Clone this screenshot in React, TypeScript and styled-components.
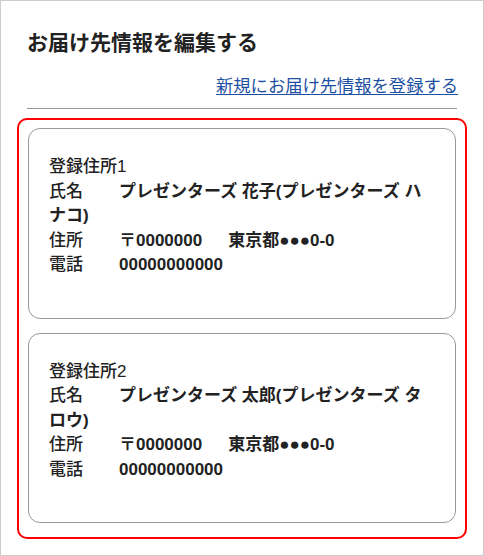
import * as React from 'react';

import styled, { createGlobalStyle } from 'styled-components';

interface IAddress {
    title: string;
    name: string;
    zip: string;
    address: string;
    tel: string;
}

const addresses: IAddress[] = [
    {
        title: '登録住所1',
        name: 'プレゼンターズ 花子(プレゼンターズ ハナコ)',
        zip: '〒0000000',
        address: '東京都●●●0-0',
        tel: '00000000000',
    },
    {
        title: '登録住所2',
        name: 'プレゼンターズ 太郎(プレゼンターズ タロウ)',
        zip: '〒0000000',
        address: '東京都●●●0-0',
        tel: '00000000000',
    },
];

const App = () => {
    return (
        <>
            <GlobalStyle />
            <Frame>
                <Header>
                    <Title>お届け先情報を編集する</Title>
                    <LinkRow>
                        <NewLink href="#">新規にお届け先情報を登録する</NewLink>
                    </LinkRow>
                    <Divider />
                </Header>
                <SelectedList>
                    {addresses.map((item) => (
                        <Card key={item.title}>
                            <CardTitle>{item.title}</CardTitle>
                            <Row>
                                <Label>氏名</Label>
                                <Value>{item.name}</Value>
                            </Row>
                            <Row>
                                <Label>住所</Label>
                                <Value>{item.zip}</Value>
                                <Value gap>{item.address}</Value>
                            </Row>
                            <Row>
                                <Label>電話</Label>
                                <Value>{item.tel}</Value>
                            </Row>
                        </Card>
                    ))}
                </SelectedList>
            </Frame>
        </>
    );
};

export default App;

const GlobalStyle = createGlobalStyle`
    html, body {
        margin: 0;
        padding: 0;
        background-color: #ffffff;
    }

    body {
        font-family: 'Liberation Sans', 'Noto Sans CJK JP', sans-serif;
        color: #222222;
    }
`;

const Frame = styled.div`
    box-sizing: border-box;

    width: 484px;
    height: 556px;

    padding: 0 16px;

    border: 1px solid #cccccc;
`;

const Header = styled.div`
    padding: 0 9px 0 10px;
`;

const Title = styled.h1`
    margin: 0;

    padding-top: 28px;

    font-size: 21px;
    font-weight: 700;
    line-height: 28px;
`;

const LinkRow = styled.div`
    display: flex;
    justify-content: flex-end;

    margin-top: 17px;
`;

const NewLink = styled.a`
    font-size: 17.3px;
    line-height: 24px;

    color: #1d50a2;
    text-decoration: underline;
    text-underline-offset: 2px;
`;

const Divider = styled.hr`
    margin: 10px 1px 0 0;

    border: none;
    border-top: 1px solid #999999;
`;

const SelectedList = styled.div`
    margin-top: 9px;

    padding: 8px 9px 0;

    border: 2px solid #ff0000;
    border-radius: 10px;
`;

const Card = styled.div`
    padding: 26px 18px 40px 20px;
    margin-bottom: 14px;

    border: 1px solid #999999;
    border-radius: 12px;

    font-size: 17px;
    line-height: 24.5px;
`;

const CardTitle = styled.div`
    font-weight: 500;
`;

const Row = styled.div``;

const Label = styled.span`
    margin-right: 36px;

    font-weight: 500;
`;

const Value = styled.span<{ gap?: boolean }>`
    font-weight: 700;

    margin-left: ${(props) => (props.gap ? '26px' : '0')};
`;
